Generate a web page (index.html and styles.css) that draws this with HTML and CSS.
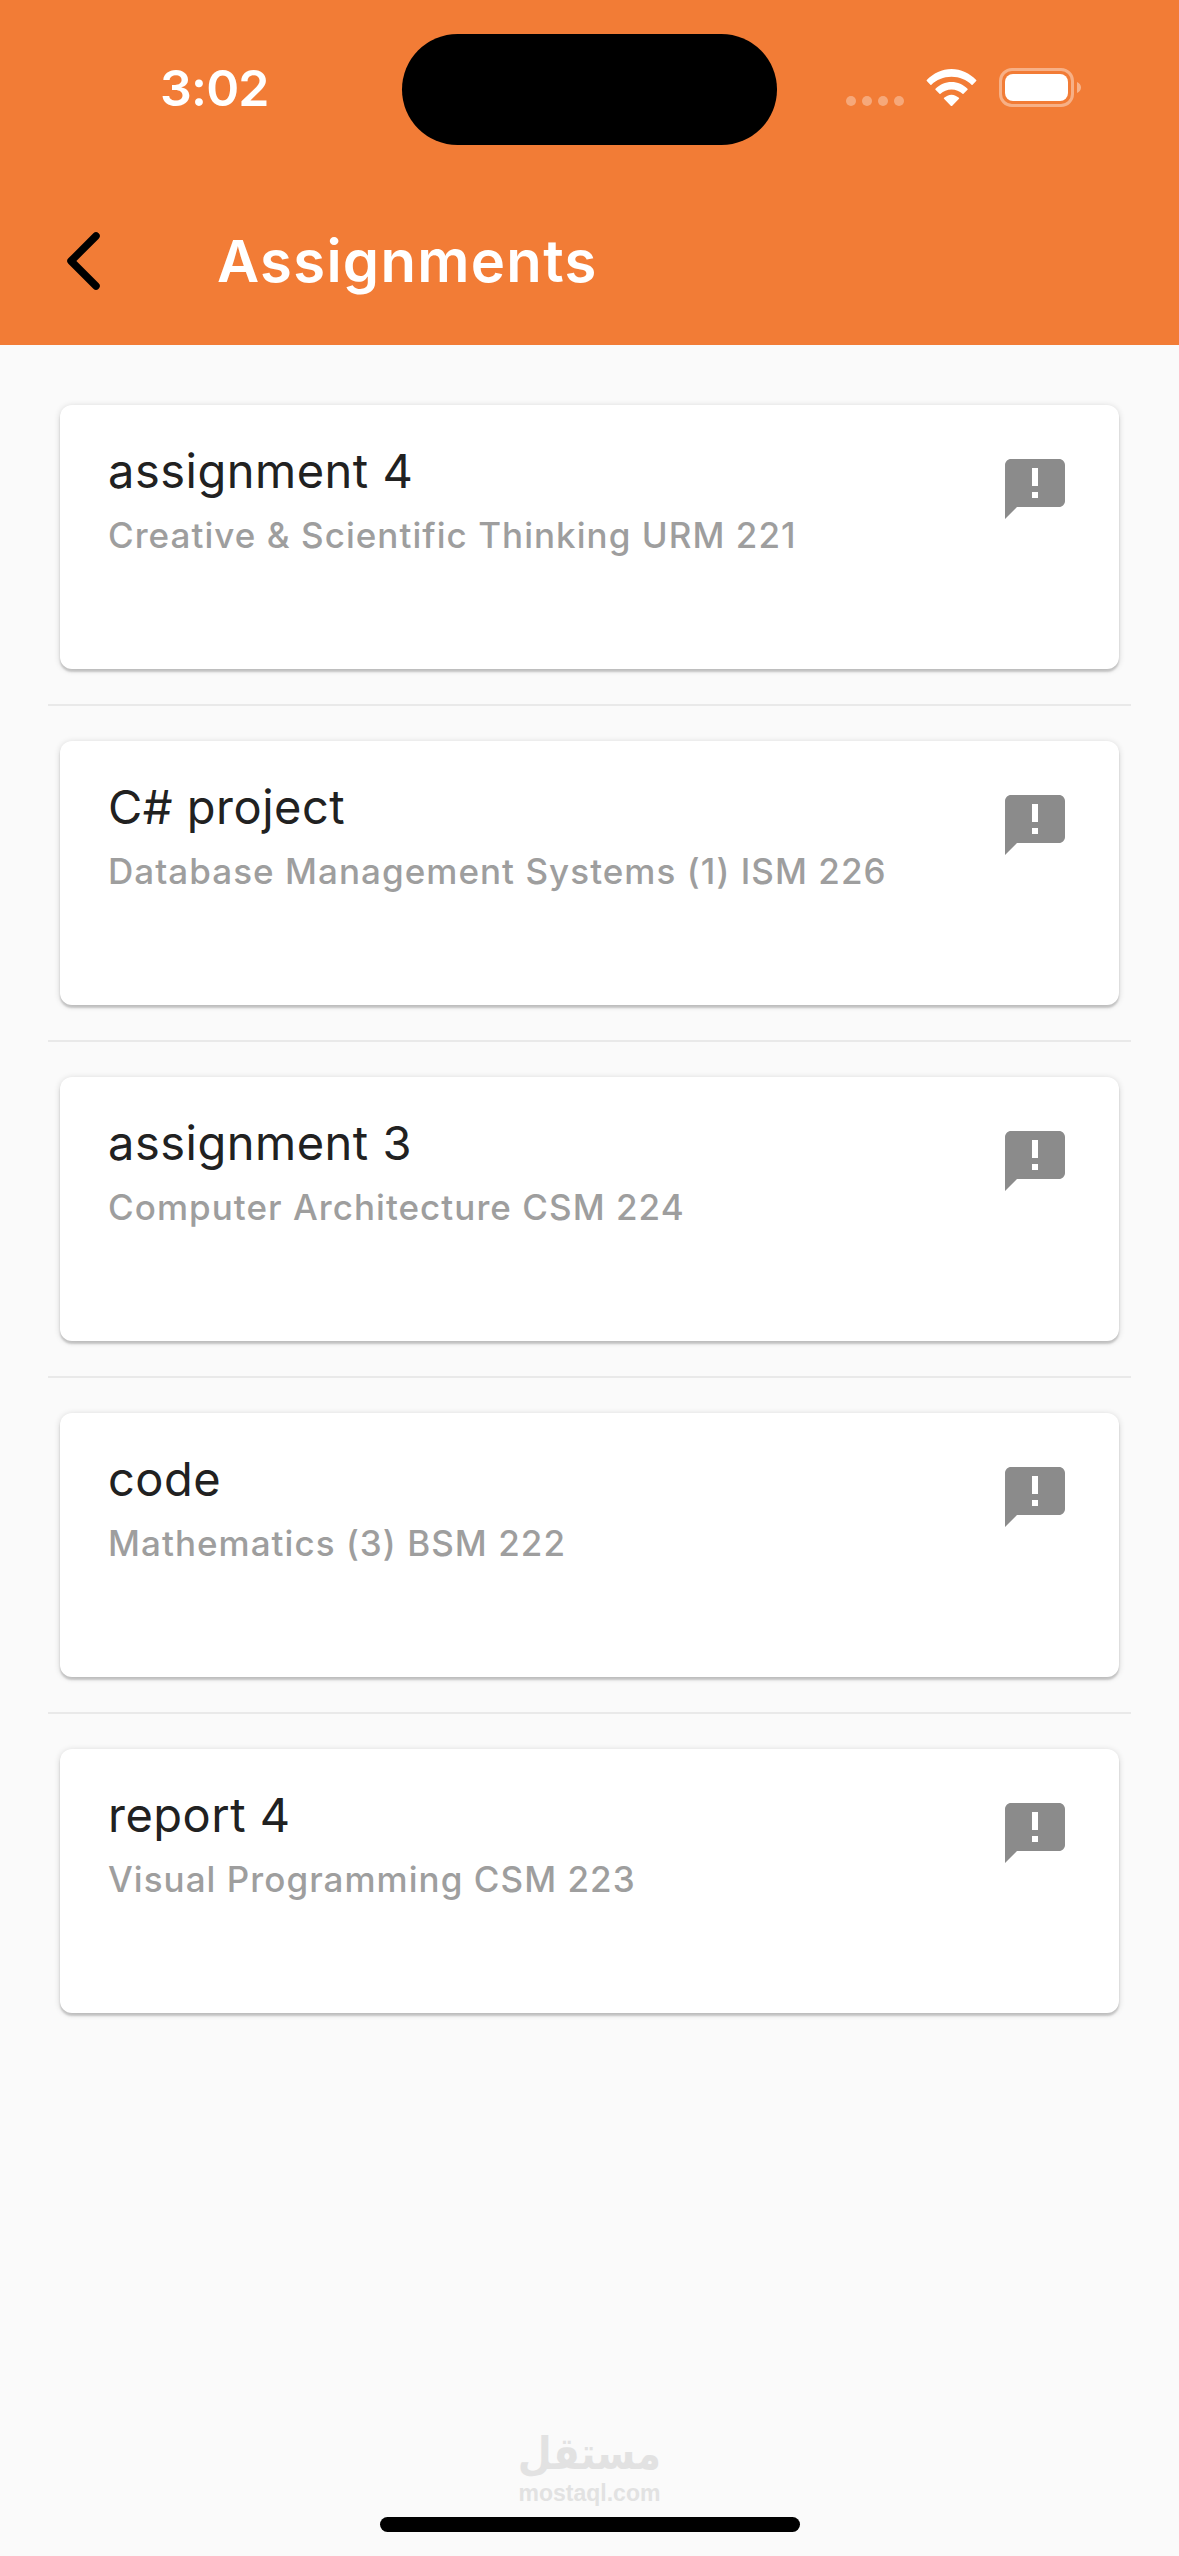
FILE: index.html
```html
<!DOCTYPE html>
<html lang="en">
<head>
<meta charset="utf-8">
<title>Assignments</title>
<link rel="stylesheet" href="styles.css">
</head>
<body>
<svg class="sprite" aria-hidden="true">
  <symbol id="feedback" viewBox="0 0 24 24">
    <path d="M20 2H4c-1.1 0-1.990.9-1.990 2L2 22l4-4h14c1.100 0 2-.9 2-2V4c0-1.100-.9-2-2-2zm-7 13h-2v-2h2v2zm0-4h-2V5h2v6z"/>
  </symbol>
</svg>
<div class="screen">
  <header class="header">
    <div class="status">
      <time class="clock">3:02</time>
      <div class="island"></div>
      <svg class="indicators" viewBox="0 0 236 40" aria-hidden="true">
        <g fill="#fff" fill-opacity=".34">
          <circle cx="5" cy="33" r="5"/><circle cx="21" cy="33" r="5"/><circle cx="37" cy="33" r="5"/><circle cx="53" cy="33" r="5"/>
        </g>
        <g fill="#fff">
          <path d="M105.500 8.800C113.500 8.800 120.500 11.900 125.800 16.900Q126.200 17.200 126.600 16.800L130.200 13.100Q130.700 12.500 130.200 12C123.600 5.300 115 1 105.500 1S87.400 5.300 80.800 12Q80.300 12.500 80.800 13.100L84.400 16.800Q84.800 17.200 85.200 16.900C90.500 11.900 97.500 8.800 105.500 8.800Z"/>
          <path d="M105.500 21.500C109.800 21.500 113.600 23.200 116.500 25.800Q117 26.300 117.500 25.800L121.500 21.800Q122 21.200 121.500 20.700C117.300 16.600 111.700 14 105.500 14S93.700 16.600 89.500 20.700Q89 21.200 89.500 21.800L93.500 25.800Q94 26.300 94.500 25.800C97.400 23.200 101.200 21.500 105.500 21.500Z"/>
          <path d="M113 30.800Q113.500 30.300 112.900 29.800C110.900 28.100 108.300 26.700 105.500 26.700S100.100 28.100 98.100 29.800Q97.500 30.300 98 30.800L105 37.900Q105.500 38.300 106 37.900Z"/>
        </g>
        <rect x="154.500" y="1.500" width="72" height="36" rx="11.500" fill="none" stroke="#fff" stroke-opacity=".4" stroke-width="3"/>
        <rect x="159" y="6" width="63" height="27" rx="8" fill="#fff"/>
        <path d="M231 14c2.500 1 4 3.200 4 5.500s-1.500 4.500-4 5.500z" fill="#fff" fill-opacity=".42"/>
      </svg>
    </div>
    <nav class="bar">
      <svg class="back" viewBox="0 0 40 64" aria-label="Back"><path d="M33 7L8 32L33 57"/></svg>
      <h1 class="title">Assignments</h1>
    </nav>
  </header>
  <main class="list">
    <article class="card">
      <div><h2 class="name">assignment 4</h2><p class="course">Creative &amp; Scientific Thinking URM 221</p></div>
      <svg class="icon"><use href="#feedback"/></svg>
    </article>
    <hr class="divider">
    <article class="card">
      <div><h2 class="name">C# project</h2><p class="course">Database Management Systems (1) ISM 226</p></div>
      <svg class="icon"><use href="#feedback"/></svg>
    </article>
    <hr class="divider">
    <article class="card">
      <div><h2 class="name">assignment 3</h2><p class="course">Computer Architecture CSM 224</p></div>
      <svg class="icon"><use href="#feedback"/></svg>
    </article>
    <hr class="divider">
    <article class="card">
      <div><h2 class="name">code</h2><p class="course">Mathematics (3) BSM 222</p></div>
      <svg class="icon"><use href="#feedback"/></svg>
    </article>
    <hr class="divider">
    <article class="card">
      <div><h2 class="name">report 4</h2><p class="course">Visual Programming CSM 223</p></div>
      <svg class="icon"><use href="#feedback"/></svg>
    </article>
  </main>
  <footer class="footer">
    <div class="brand">
      <span class="brand-ar" lang="ar" dir="rtl">مستقل</span>
      <span class="brand-en">mostaql.com</span>
    </div>
    <div class="home"></div>
  </footer>
</div>
</body>
</html>
```
FILE: styles.css
```css
* { box-sizing: border-box; margin: 0; padding: 0; }
body {
  background: #fafafa;
  font-family: Inter, "Liberation Sans", sans-serif;
}
.sprite { display: none; }
.screen {
  width: 1179px;
  height: 2556px;
  display: flex;
  flex-direction: column;
}
.header { height: 345px; background: #f27c36; color: #fff; }
.status {
  height: 177px;
  display: grid;
  grid-template-columns: 402px 375px 1fr;
  align-items: start;
}
.clock {
  padding: 58px 0 0 160px;
  font-size: 50px;
  line-height: 60px;
  font-weight: 600;
  letter-spacing: -0.800px;
}
.island { margin-top: 33.500px; height: 111px; border-radius: 55.500px; background: #000; }
.indicators { width: 236px; height: 40px; margin: 68px 0 0 69px; }
.bar { height: 168px; display: flex; align-items: center; }
.back { width: 40px; height: 64px; margin-left: 63px; }
.back path { fill: none; stroke: #000; stroke-width: 7.500; stroke-linecap: round; stroke-linejoin: round; }
.title { margin-left: 114px; font-size: 58px; font-weight: 600; line-height: 72px; letter-spacing: 1.300px; }
.list { flex: 1; padding: 60px 48px 0; }
.card {
  height: 264px;
  margin: 0 12px;
  padding: 36px 48px 0 48px;
  display: flex;
  justify-content: space-between;
  background: #fff;
  border-radius: 12px;
  box-shadow: 0 3px 2px rgba(0, 0, 0, .16), 0 1px 6px rgba(0, 0, 0, .16);
}
.name { font-size: 47px; font-weight: 400; line-height: 60px; letter-spacing: 0.500px; color: #212121; }
.course { margin-top: 12px; font-size: 35px; font-weight: 500; line-height: 44px; letter-spacing: 1.040px; color: #9e9e9e; white-space: nowrap; }
.icon { width: 72px; height: 72px; margin-top: 12px; fill: #8b8b8b; }
.divider { border: 0; height: 2px; margin: 35px 0; background: #e9e9e9; }
.footer { display: flex; flex-direction: column; align-items: center; height: 122px; }
.brand { display: flex; flex-direction: column; align-items: center; height: 83px; color: #e2e2e2; }
.brand-ar { margin-top: -7px; font: bold 45px/53px "DejaVu Sans", sans-serif; transform: scaleX(.87); }
.brand-en { font: bold 23px/26px "Liberation Sans", sans-serif; }
.home { width: 420px; height: 15px; border-radius: 7.500px; background: #000; }
```
